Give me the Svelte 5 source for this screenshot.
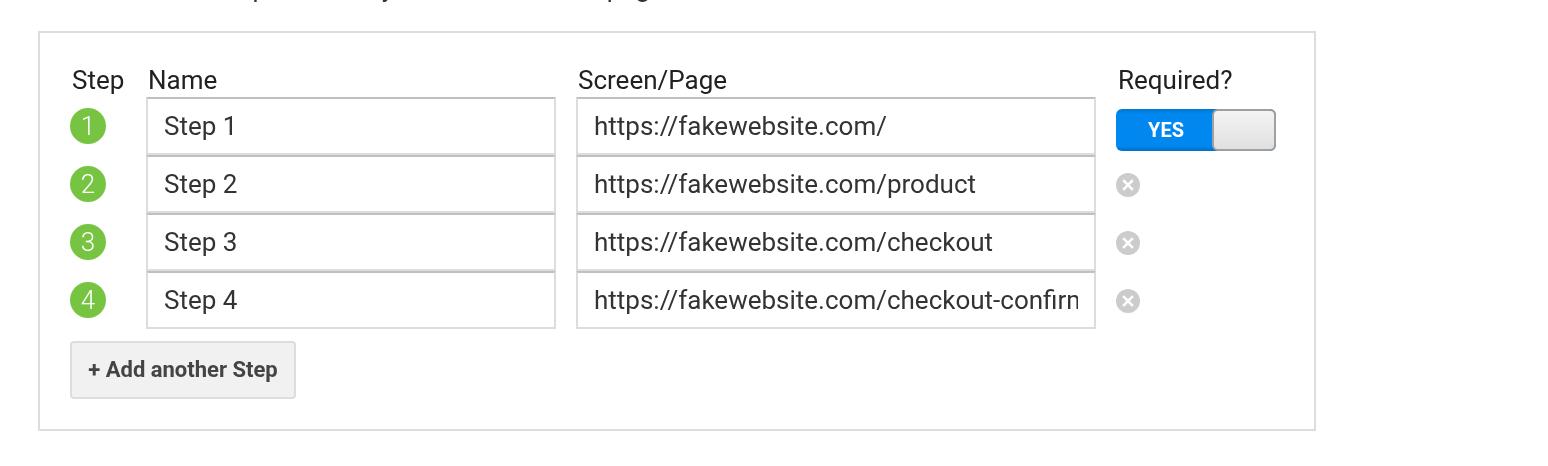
<script>
  const steps = [
    { name: 'Step 1', page: 'https://fakewebsite.com/' },
    { name: 'Step 2', page: 'https://fakewebsite.com/product' },
    { name: 'Step 3', page: 'https://fakewebsite.com/checkout' },
    { name: 'Step 4', page: 'https://fakewebsite.com/checkout-confirmation' }
  ];
</script>

<div class="page">
  <p class="intro">Enter the steps that are your website's own page</p>
  <div class="card">
    <div class="grid">
      <div class="head">Step</div>
      <div class="head name">Name</div>
      <div class="head name">Screen/Page</div>
      <div class="head">Required?</div>

      {#each steps as step, i}
        <div class="num"><span>{i + 1}</span></div>
        <input class="field" value={step.name} />
        <input class="field" value={step.page} />
        <div class="req">
          {#if i === 0}
            <div class="toggle">
              <div class="on">YES</div>
              <div class="knob"></div>
            </div>
          {:else}
            <svg class="remove" width="24" height="24" viewBox="0 0 24 24">
              <circle cx="12" cy="12" r="12" fill="#ccc" />
              <path d="M7.2 7.2l9.6 9.6M16.8 7.2l-9.6 9.6" stroke="#fff" stroke-width="2.6" />
            </svg>
          {/if}
        </div>
      {/each}
    </div>
    <button class="add">+ Add another Step</button>
  </div>
</div>

<style>
  :global(body) {
    background: #fff;
  }
  .page {
    height: 466px;
    overflow: hidden;
    padding: 0 38px;
    font-family: Roboto, sans-serif;
    color: #333;
    will-change: transform;
  }
  .intro {
    margin: -27px 0 28px;
    padding-left: 69px;
    height: 30px;
    line-height: 30px;
    font-size: 26px;
    white-space: nowrap;
  }
  .card {
    box-sizing: border-box;
    width: 1278px;
    height: 400px;
    border: 2px solid #ddd;
    padding: 34px 30px 0;
  }
  .grid {
    display: grid;
    grid-template-columns: 76px 410px 540px auto;
    grid-auto-rows: 58px;
    grid-template-rows: 30px;
    align-items: start;
  }
  .head {
    font-size: 26px;
    line-height: 26px;
    color: #212121;
    padding-left: 2px;
  }
  .grid > .head:nth-child(3) {
    margin-left: 20px;
  }
  .grid > .head:nth-child(4) {
    margin-left: 22px;
    padding-left: 0;
  }
  .num {
    height: 58px;
    display: flex;
    align-items: center;
  }
  .num span {
    width: 36px;
    height: 36px;
    border-radius: 50%;
    background: #76c442;
    color: #fff;
    font-size: 26px;
    font-weight: 300;
    line-height: 36px;
    text-align: center;
  }
  .field {
    box-sizing: border-box;
    width: 410px;
    height: 58px;
    border: 2px solid #ddd;
    border-top-color: #c0c0c0;
    padding: 0 16px;
    font-family: inherit;
    font-size: 26px;
    color: #333;
    outline: none;
    background: #fff;
  }
  .field:nth-child(4n + 3) {
    width: 520px;
    margin-left: 20px;
  }
  .req {
    height: 58px;
    margin-left: 20px;
    display: flex;
    align-items: center;
  }
  .toggle {
    display: flex;
    width: 160px;
    height: 42px;
    margin-top: 8px;
    border-radius: 6px;
    overflow: hidden;
    background: linear-gradient(#0077cc, #0088f0 12%, #0088f0 88%, #0070c0);
  }
  .on {
    width: 100px;
    flex: none;
    text-align: center;
    color: #fff;
    font-size: 20px;
    font-weight: 700;
    line-height: 42px;
  }
  .knob {
    box-sizing: border-box;
    flex: none;
    width: 64px;
    height: 42px;
    margin-left: -4px;
    border: 2px solid #a0a0a0;
    border-radius: 6px;
    background: linear-gradient(#f4f4f4, #e0e0e0);
  }
  .remove {
    display: block;
    margin-top: 2px;
  }
  .add {
    display: block;
    box-sizing: border-box;
    width: 226px;
    height: 58px;
    margin-top: 12px;
    border: 2px solid #ddd;
    border-radius: 4px;
    background: #f1f1f1;
    color: #444;
    font-family: inherit;
    font-size: 22px;
    font-weight: 700;
    padding: 0 0 2px;
  }
</style>
